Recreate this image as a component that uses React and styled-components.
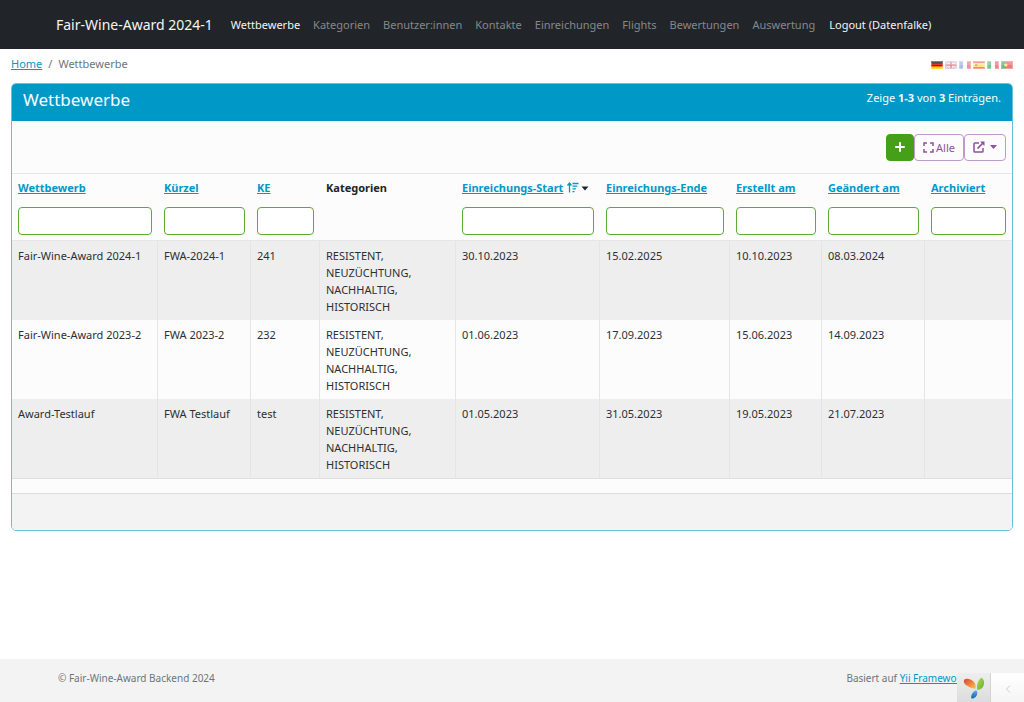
import React, { useState } from 'react';
import styled, { createGlobalStyle } from 'styled-components';

const GlobalStyle = createGlobalStyle`
  *, *::before, *::after {
    box-sizing: border-box;
  }

  body {
    margin: 0;
    background: #fff;
    color: #212529;
    font-family: "Noto Sans", sans-serif;
    font-size: 11px;
    line-height: 17px;
  }

  a {
    color: #0099c7;
    text-underline-offset: 1px;
  }
`;

const Page = styled.div`
  min-height: 100vh;
  display: flex;
  flex-direction: column;
`;

const Navbar = styled.header`
  background: #212529;
`;

const Container = styled.div`
  width: 100%;
  max-width: 936px;
  margin: 0 auto;
  padding: 0 12px;
  display: flex;
  align-items: center;
`;

const NavContainer = styled(Container)`
  height: 49px;
`;

const Brand = styled.a`
  margin-right: 18px;
  color: #f4f4f4;
  font-size: 14px;
  line-height: 20px;
  text-decoration: none;
  white-space: nowrap;
`;

const NavList = styled.nav`
  display: flex;
  gap: 13px;
`;

const NavLink = styled.a`
  color: ${({ $active }) => ($active ? '#f4f4f4' : '#85888a')};
  text-decoration: none;
  white-space: nowrap;
`;

const LogoutButton = styled.button`
  margin-left: 14px;
  padding: 0;
  border: 0;
  background: none;
  color: #f4f4f4;
  font: inherit;
  white-space: nowrap;
  cursor: pointer;
`;

const Main = styled.main`
  flex: 1;
  padding: 0 11px;
`;

const TopRow = styled.div`
  height: 34px;
  padding-top: 6px;
  display: flex;
  justify-content: space-between;
`;

const Breadcrumb = styled.nav`
  color: #6c757d;

  span::before {
    content: '/';
    padding: 0 6px;
  }
`;

const Languages = styled.div`
  display: flex;
  gap: 2px;
  padding-top: 6px;
`;

const LanguageLink = styled.a`
  display: block;
  height: 8px;
  opacity: ${({ $active }) => ($active ? 1 : 0.6)};

  svg {
    display: block;
  }
`;

const Card = styled.section`
  border: 1px solid #66c2dd;
  border-radius: 5px;
  background: #fcfcfc;
  overflow: hidden;
`;

const CardHeader = styled.div`
  height: 37px;
  padding: 4px 11px;
  background: #0099c7;
  color: #f8fcfd;
  display: flex;
  justify-content: space-between;
`;

const Title = styled.h1`
  margin: 0;
  font-size: 17px;
  font-weight: 400;
  line-height: 24px;
`;

const Summary = styled.div`
  line-height: 19px;
`;

const Toolbar = styled.div`
  height: 53px;
  padding: 0 6px;
  border-bottom: 1px solid #e6e6e6;
  display: flex;
  align-items: center;
  justify-content: flex-end;
`;

const ToolButton = styled.button`
  height: 27px;
  padding: 0 8px;
  border: 1px solid ${({ $primary }) => ($primary ? '#469f18' : '#bf9acb')};
  border-radius: 4px;
  background: ${({ $primary }) => ($primary ? '#469f18' : '#fcfcfc')};
  color: ${({ $primary }) => ($primary ? '#fff' : '#8d519f')};
  display: flex;
  align-items: center;
  gap: ${({ $gap }) => $gap || '2px'};
  font: inherit;
  cursor: pointer;
`;

const Table = styled.table`
  width: 100%;
  table-layout: fixed;
  border-collapse: separate;
  border-spacing: 0;
`;

const HeadCell = styled.th`
  padding: 5px 6px 7px;
  text-align: left;
  font-weight: 700;
  white-space: nowrap;
`;

const SortIcon = styled.svg`
  margin: 0 2px 0 4px;
  vertical-align: -1px;
`;

const CaretIcon = styled.svg`
  vertical-align: 1px;
`;

const FilterCell = styled.td`
  padding: 4px 6px 5px;
  border-bottom: 1px solid #e6e6e6;
`;

const FilterInput = styled.input`
  display: block;
  width: 100%;
  height: 28px;
  padding: 4px 8px;
  border: 1px solid #5cab33;
  border-radius: 4px;
  background: #fff;
  color: #212529;
  font: inherit;
`;

const Row = styled.tr`
  background: ${({ $striped }) => ($striped ? '#eee' : '#fcfcfc')};
`;

const Cell = styled.td`
  padding: 6px 6px 5px;
  border-right: 1px solid #e3e5e7;
  color: #2c3034;
  vertical-align: top;

  &:last-child {
    border-right: 0;
  }

  tr:last-child > & {
    border-bottom: 1px solid #dedfe0;
  }
`;

const CardFooter = styled.div`
  height: 37px;
  margin-top: 14px;
  border-top: 1px solid #dcdcdc;
  background: #f3f3f3;
`;

const Footer = styled.footer`
  background: #f3f3f3;
  color: #6c757d;
  font-size: 10px;
`;

const FooterContainer = styled(Container)`
  height: 43px;
  padding: 0 14px 4px;
  justify-content: space-between;
`;

const DebugToolbar = styled.div`
  position: fixed;
  right: 0;
  bottom: 0;
  height: 29px;
  display: flex;
`;

const DebugLogo = styled.a`
  width: 34px;
  background: linear-gradient(#eee, #dcdcdc);
  border-right: 1px solid #d3d3d3;
  display: flex;
  align-items: center;
  justify-content: center;
`;

const DebugToggle = styled.button`
  width: 33px;
  padding: 2px 0 0;
  border: 0;
  background: linear-gradient(#fff, #f5f5f5);
  cursor: pointer;
`;

const navItems = [
  'Wettbewerbe',
  'Kategorien',
  'Benutzer:innen',
  'Kontakte',
  'Einreichungen',
  'Flights',
  'Bewertungen',
  'Auswertung',
];

const columns = [
  { key: 'name', label: 'Wettbewerb', width: 146, sortable: true },
  { key: 'code', label: 'Kürzel', width: 93, sortable: true },
  { key: 'ke', label: 'KE', width: 69, sortable: true },
  { key: 'categories', label: 'Kategorien', width: 136 },
  { key: 'start', label: 'Einreichungs-Start', width: 144, sortable: true, sorted: true },
  { key: 'end', label: 'Einreichungs-Ende', width: 130, sortable: true },
  { key: 'created', label: 'Erstellt am', width: 92, sortable: true },
  { key: 'changed', label: 'Geändert am', width: 103, sortable: true },
  { key: 'archived', label: 'Archiviert', width: 87, sortable: true },
];

const categories = 'RESISTENT, NEUZÜCHTUNG, NACHHALTIG, HISTORISCH';

const rows = [
  {
    name: 'Fair-Wine-Award 2024-1',
    code: 'FWA-2024-1',
    ke: '241',
    categories,
    start: '30.10.2023',
    end: '15.02.2025',
    created: '10.10.2023',
    changed: '08.03.2024',
  },
  {
    name: 'Fair-Wine-Award 2023-2',
    code: 'FWA 2023-2',
    ke: '232',
    categories,
    start: '01.06.2023',
    end: '17.09.2023',
    created: '15.06.2023',
    changed: '14.09.2023',
  },
  {
    name: 'Award-Testlauf',
    code: 'FWA Testlauf',
    ke: 'test',
    categories,
    start: '01.05.2023',
    end: '31.05.2023',
    created: '19.05.2023',
    changed: '21.07.2023',
  },
];

const flags = [
  {
    label: 'Deutsch',
    art: (
      <>
        <rect width="11" height="8" fill="#ffce00" />
        <rect width="11" height="5.4" fill="#d00" />
        <rect width="11" height="2.7" fill="#222" />
      </>
    ),
  },
  {
    label: 'English',
    art: (
      <>
        <rect width="11" height="8" fill="#5a6cc4" />
        <path d="M0 0 11 8M11 0 0 8" stroke="#fff" strokeWidth="1.8" />
        <path d="M0 0 11 8M11 0 0 8" stroke="#e0304a" strokeWidth="0.6" />
        <path d="M5.5 0v8M0 4h11" stroke="#fff" strokeWidth="2.8" />
        <path d="M5.5 0v8M0 4h11" stroke="#e0304a" strokeWidth="1.4" />
      </>
    ),
  },
  {
    label: 'Français',
    art: (
      <>
        <rect width="11" height="8" fill="#fff" />
        <rect width="3.7" height="8" fill="#7890d8" />
        <rect x="7.3" width="3.7" height="8" fill="#f0444c" />
      </>
    ),
  },
  {
    label: 'Español',
    art: (
      <>
        <rect width="11" height="8" fill="#ee3030" />
        <rect y="2" width="11" height="4" fill="#ffda30" />
        <rect x="2" y="3" width="2" height="2" fill="#c86a20" />
      </>
    ),
  },
  {
    label: 'Italiano',
    art: (
      <>
        <rect width="11" height="8" fill="#fff" />
        <rect width="3.7" height="8" fill="#16a048" />
        <rect x="7.3" width="3.7" height="8" fill="#ee2c3c" />
      </>
    ),
  },
  {
    label: 'Português',
    art: (
      <>
        <rect width="11" height="8" fill="#f02020" />
        <rect width="4.4" height="8" fill="#168040" />
        <circle cx="4.4" cy="4" r="1.6" fill="#ffd830" />
      </>
    ),
  },
];

const Flag = ({ art }) => (
  <svg width="12" height="8" viewBox="0 0 11 8" preserveAspectRatio="none" aria-hidden="true">
    {art}
    <rect width="11" height="4" fill="#fff" opacity="0.2" />
    <rect x="0.5" y="0.5" width="10" height="7" fill="none" stroke="#fff" strokeOpacity="0.3" />
  </svg>
);

const YiiLogo = () => (
  <svg width="22" height="22" viewBox="0 0 22 22" aria-hidden="true">
    <defs>
      <linearGradient id="leafOrange" x1="0" y1="0" x2="1" y2="1">
        <stop offset="0" stopColor="#e0402c" />
        <stop offset="0.5" stopColor="#f08040" />
        <stop offset="1" stopColor="#f8c850" />
      </linearGradient>
      <linearGradient id="leafGreen" x1="0" y1="0" x2="1" y2="1">
        <stop offset="0" stopColor="#b8d848" />
        <stop offset="1" stopColor="#60b038" />
      </linearGradient>
      <linearGradient id="leafBlue" x1="0" y1="0" x2="0" y2="1">
        <stop offset="0" stopColor="#60b0e8" />
        <stop offset="1" stopColor="#1460b0" />
      </linearGradient>
    </defs>
    <path
      d="M.8 4.200C1 1.500 4.500 1.200 8 2.800c3.500 1.600 5.300 4.600 4.700 9C8 11 .8 8.500.8 4.200z"
      fill="url(#leafOrange)"
    />
    <path
      d="M18.200.8c2.800 1 3.600 5 2.300 8-1 2.500-3.200 4-6 4.200-.8-2-.8-4.500.2-7 .8-2.200 2-4.200 3.500-5.200z"
      fill="url(#leafGreen)"
    />
    <path
      d="M13.300 13.200c1.600 1.800 1.300 4.600-.5 6.500-1.200 1.300-2.800 2-4.300 1.800-1-2.500.8-7.200 4.800-8.300z"
      fill="url(#leafBlue)"
    />
  </svg>
);

const App = () => {
  const [filters, setFilters] = useState({});

  const handleFilter = (key, value) => {
    setFilters({ ...filters, [key]: value });
  };

  return (
    <Page>
      <GlobalStyle />
      <Navbar>
        <NavContainer>
          <Brand href="#">Fair-Wine-Award 2024-1</Brand>
          <NavList>
            {navItems.map((item, index) => (
              <NavLink key={item} href="#" $active={index === 0}>
                {item}
              </NavLink>
            ))}
          </NavList>
          <LogoutButton type="button">Logout (Datenfalke)</LogoutButton>
        </NavContainer>
      </Navbar>

      <Main>
        <TopRow>
          <Breadcrumb>
            <a href="#">Home</a>
            <span>Wettbewerbe</span>
          </Breadcrumb>
          <Languages>
            {flags.map((flag, index) => (
              <LanguageLink key={flag.label} href="#" aria-label={flag.label} $active={index === 0}>
                <Flag art={flag.art} />
              </LanguageLink>
            ))}
          </Languages>
        </TopRow>

        <Card>
          <CardHeader>
            <Title>Wettbewerbe</Title>
            <Summary>
              Zeige <b>1-3</b> von <b>3</b> Einträgen.
            </Summary>
          </CardHeader>

          <Toolbar>
            <ToolButton type="button" $primary aria-label="Hinzufügen">
              <svg width="10" height="10" viewBox="0 0 10 10" aria-hidden="true">
                <path d="M5 1v8M1 5h8" stroke="currentColor" strokeWidth="2" strokeLinecap="round" />
              </svg>
            </ToolButton>
            <ToolButton type="button">
              <svg width="11" height="11" viewBox="0 0 11 11" aria-hidden="true">
                <path
                  d="M1 4V1h3M7 1h3v3M10 7v3H7M4 10H1V7"
                  fill="none"
                  stroke="currentColor"
                  strokeWidth="1.5"
                />
              </svg>
              Alle
            </ToolButton>
            <ToolButton type="button" $gap="5px" aria-label="Export">
              <svg width="12" height="12" viewBox="0 0 12 12" aria-hidden="true">
                <path
                  d="M6 2H1.8a.8.8 0 0 0-.8.8v7.4a.8.8 0 0 0 .8.8h7.4a.8.8 0 0 0 .8-.8V7"
                  fill="none"
                  stroke="currentColor"
                  strokeWidth="1.5"
                />
                <path d="M4.5 7.5 9.500 2.500" stroke="currentColor" strokeWidth="1.7" />
                <path d="M7 0.500h4.500V5z" fill="currentColor" />
              </svg>
              <svg width="7" height="4" viewBox="0 0 7 4" aria-hidden="true">
                <path d="M0 0h7L3.500 4z" fill="currentColor" />
              </svg>
            </ToolButton>
          </Toolbar>

          <Table>
            <colgroup>
              {columns.map((column) => (
                <col key={column.key} style={{ width: column.width }} />
              ))}
            </colgroup>
            <thead>
              <tr>
                {columns.map((column) => (
                  <HeadCell key={column.key} scope="col">
                    {column.sortable ? <a href="#">{column.label}</a> : column.label}
                    {column.sorted && (
                      <>
                        <SortIcon width="12" height="11" viewBox="0 0 12 11" aria-hidden="true">
                          <path
                            d="M2.500 10.500V1.500M0.500 3.500l2-2.500 2 2.500M5.500 1.500h6M5.500 4.200h4.800M5.500 6.900h3.400M5.500 9.600h2"
                            fill="none"
                            stroke="#0099c7"
                            strokeWidth="1.3"
                          />
                        </SortIcon>
                        <CaretIcon width="8" height="5" viewBox="0 0 8 5" aria-hidden="true">
                          <path d="M0.500 0.500h7L4 4.500z" fill="#212529" />
                        </CaretIcon>
                      </>
                    )}
                  </HeadCell>
                ))}
              </tr>
              <tr>
                {columns.map((column) => (
                  <FilterCell key={column.key}>
                    {column.sortable && (
                      <FilterInput
                        type="text"
                        aria-label={column.label}
                        value={filters[column.key] || ''}
                        onChange={(e) => handleFilter(column.key, e.target.value)}
                      />
                    )}
                  </FilterCell>
                ))}
              </tr>
            </thead>
            <tbody>
              {rows.map((row, index) => (
                <Row key={row.name} $striped={index % 2 === 0}>
                  {columns.map((column) => (
                    <Cell key={column.key}>{row[column.key]}</Cell>
                  ))}
                </Row>
              ))}
            </tbody>
          </Table>

          <CardFooter />
        </Card>
      </Main>

      <Footer>
        <FooterContainer>
          <span>© Fair-Wine-Award Backend 2024</span>
          <span>
            Basiert auf <a href="#">Yii Framework</a>
          </span>
        </FooterContainer>
      </Footer>

      <DebugToolbar>
        <DebugLogo href="#" aria-label="Yii Debugger">
          <YiiLogo />
        </DebugLogo>
        <DebugToggle type="button" aria-label="Toolbar öffnen">
          <svg width="6" height="8" viewBox="0 0 6 8" aria-hidden="true">
            <path d="M5 0.500 1.500 4 5 7.500" fill="none" stroke="#ccc" />
          </svg>
        </DebugToggle>
      </DebugToolbar>
    </Page>
  );
};

export default App;
